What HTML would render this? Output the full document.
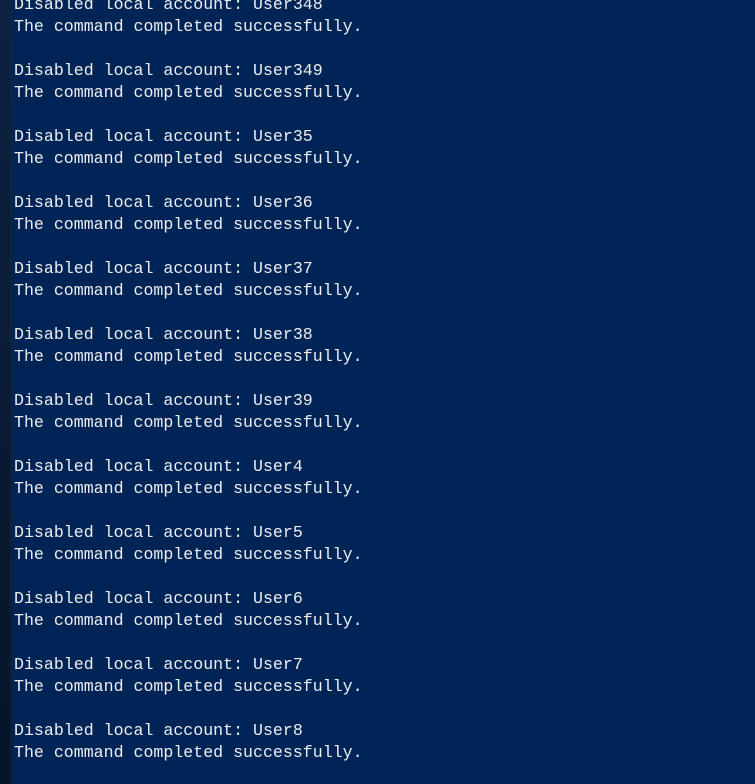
<!DOCTYPE html>
<html><head><style>
html,body{margin:0;padding:0;width:755px;height:784px;overflow:hidden;background:#012456;}
.strip{position:absolute;left:0;top:0;width:13px;height:784px;background:linear-gradient(#0c2241,#061528);}
.strip2{position:absolute;left:10px;top:0;width:3px;height:784px;background:#0f2748;opacity:.6}
pre{position:absolute;left:14px;top:-6.4px;margin:0;font-family:"Liberation Mono",monospace;font-size:16.6px;line-height:22px;color:#eeedf0;}
</style></head><body>
<div class="strip"></div><div class="strip2"></div>
<pre>Disabled local account: User348
The command completed successfully.

Disabled local account: User349
The command completed successfully.

Disabled local account: User35
The command completed successfully.

Disabled local account: User36
The command completed successfully.

Disabled local account: User37
The command completed successfully.

Disabled local account: User38
The command completed successfully.

Disabled local account: User39
The command completed successfully.

Disabled local account: User4
The command completed successfully.

Disabled local account: User5
The command completed successfully.

Disabled local account: User6
The command completed successfully.

Disabled local account: User7
The command completed successfully.

Disabled local account: User8
The command completed successfully.
</pre>
</body></html>
